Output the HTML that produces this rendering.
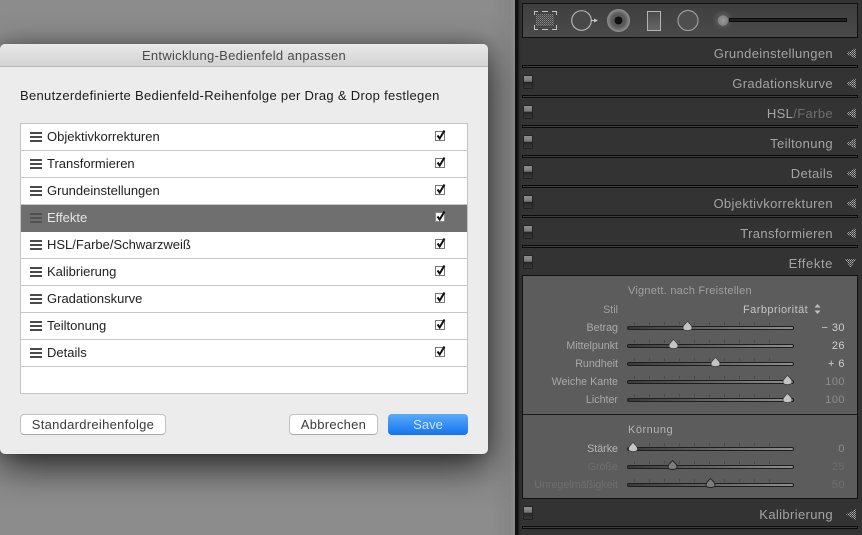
<!DOCTYPE html>
<html><head><meta charset="utf-8">
<style>
html,body{margin:0;padding:0}
body{width:862px;height:535px;overflow:hidden;position:relative;background:#8b8b8b;font-family:"Liberation Sans",sans-serif}
.a{position:absolute}
.left{left:0;top:0;width:515px;height:535px;background:linear-gradient(90deg,#8c8c8c 0,#8c8c8c 490px,#858585 510px,#8d8d8d 515px);overflow:hidden}
.dlg{left:0;top:44px;width:488px;height:410px;background:#ececec;border-radius:5px;box-shadow:0 12px 38px rgba(0,0,0,.72),0 0 14px rgba(0,0,0,.2)}
.tb{left:0;top:0;width:488px;height:22px;background:linear-gradient(#e9e9e9,#d3d3d3);border-bottom:1px solid #b5b5b5;border-radius:5px 5px 0 0;text-align:center;font-size:13px;line-height:23px;color:#4a4a4a;letter-spacing:.29px}
.hd{left:20px;top:44px;font-size:13px;line-height:16px;color:#1c1c1c;letter-spacing:.31px;white-space:nowrap}
.list{left:20px;top:123px;width:446px;height:269px;background:#fff;border:1px solid #c4c4c4}
.row{position:absolute;left:0;width:446px;height:26px;border-bottom:1px solid #c8c8c8;font-size:13px;line-height:25px;color:#222;letter-spacing:0}
.row span{position:absolute;left:26px;white-space:nowrap}
.row i{position:absolute;left:9px;top:8px;width:12px;height:2px;background:#4a4a4a;box-shadow:0 4px 0 #4a4a4a,0 8px 0 #4a4a4a}
.row svg{position:absolute;left:414px;top:5px}
.row.s{background:#6f6f6f;color:#e6e6e6;height:26px;border-bottom-color:#6f6f6f}
.row.s i{background:#525252;box-shadow:0 4px 0 #525252,0 8px 0 #525252}
.btn{top:414px;height:19px;background:#fff;border:1px solid #c2c2c2;border-bottom-color:#aaa;border-radius:4px;font-size:13px;line-height:20px;text-align:center;color:#3a3a3a;letter-spacing:.28px;white-space:nowrap}
.save{left:388px;top:414px;width:80px;height:21px;border-radius:4px;background:linear-gradient(#5aaaf8,#1573f0);color:#cfe4fb;font-size:13px;line-height:22px;text-align:center;letter-spacing:0}
.right{left:515px;top:0;width:347px;height:535px;background:#333}
.edge{left:515px;top:0;width:7px;height:535px;background:linear-gradient(90deg,#111 0,#111 3px,#2c2c2c 4px,#333 7px)}
.tool{left:522px;top:3px;width:334px;height:33px;background:linear-gradient(#3f3f3f,#4a4a4a);border:1px solid #111}
.h{right:29px;font-size:13px;line-height:16px;color:#a4a4a4;letter-spacing:.36px;white-space:nowrap}
.sep{left:522px;width:334px;height:1px;background:#3c3c3c;border:1px solid #0c0c0c}
.sw{left:524px;width:8px;height:12px;background:linear-gradient(#8e8e8e 0,#777 45%,#262626 50%,#383838 100%);box-shadow:0 0 0 .5px #111}
.body{left:522px;top:275px;width:334px;height:222px;background:#5c5c5c;border:1px solid #111}
.div{left:523px;top:414px;width:334px;height:1px;background:#1c1c1c}
.l{right:244px;font-size:10.7px;line-height:13px;color:#a9a9a9;white-space:nowrap}
.t{left:628px;font-size:11px;line-height:13px;color:#a6a6a6;letter-spacing:.24px;white-space:nowrap}
.v{right:17px;font-size:11px;line-height:13px;color:#cfcfcf;letter-spacing:.45px;white-space:nowrap}
.d{color:#6e6e6e}
.m{color:#8d8d8d}
.tr{left:627px;width:165px;height:2px;background:linear-gradient(90deg,#3a3a3a,#8f8f8f);border:1px solid #1e1e1e;border-radius:2px}
.tick{left:634px;width:150px;height:3px;background:repeating-linear-gradient(90deg,#4a4a4a 0 1px,transparent 1px 15px)}
</style></head>
<body>
<div class="a left">
<div class="a dlg">
<div class="a tb">Entwicklung-Bedienfeld anpassen</div>
<div class="a hd">Benutzerdefinierte Bedienfeld-Reihenfolge per Drag &amp; Drop festlegen</div>
</div>
<div class="a list">
<div class="row" style="top:0"><i></i><span>Objektivkorrekturen</span><svg width="11" height="13" viewBox="0 0 11 13"><rect x=".5" y="2.500" width="9" height="9" fill="#fff" stroke="#777"/><path d="M2.500 6.500L4.700 9.500L9.500 1.500" fill="none" stroke="#111" stroke-width="2"/></svg></div>
<div class="row" style="top:27px"><i></i><span>Transformieren</span><svg width="11" height="13" viewBox="0 0 11 13"><rect x=".5" y="2.500" width="9" height="9" fill="#fff" stroke="#777"/><path d="M2.500 6.500L4.700 9.500L9.500 1.500" fill="none" stroke="#111" stroke-width="2"/></svg></div>
<div class="row" style="top:54px"><i></i><span>Grundeinstellungen</span><svg width="11" height="13" viewBox="0 0 11 13"><rect x=".5" y="2.500" width="9" height="9" fill="#fff" stroke="#777"/><path d="M2.500 6.500L4.700 9.500L9.500 1.500" fill="none" stroke="#111" stroke-width="2"/></svg></div>
<div class="row s" style="top:81px"><i></i><span>Effekte</span><svg width="11" height="13" viewBox="0 0 11 13"><rect x=".5" y="2.500" width="9" height="9" fill="#f4f4f4" stroke="#888"/><path d="M2.500 6.500L4.700 9.500L9.500 1.500" fill="none" stroke="#111" stroke-width="2"/></svg></div>
<div class="row" style="top:108px"><i></i><span>HSL/Farbe/Schwarzweiß</span><svg width="11" height="13" viewBox="0 0 11 13"><rect x=".5" y="2.500" width="9" height="9" fill="#fff" stroke="#777"/><path d="M2.500 6.500L4.700 9.500L9.500 1.500" fill="none" stroke="#111" stroke-width="2"/></svg></div>
<div class="row" style="top:135px"><i></i><span>Kalibrierung</span><svg width="11" height="13" viewBox="0 0 11 13"><rect x=".5" y="2.500" width="9" height="9" fill="#fff" stroke="#777"/><path d="M2.500 6.500L4.700 9.500L9.500 1.500" fill="none" stroke="#111" stroke-width="2"/></svg></div>
<div class="row" style="top:162px"><i></i><span>Gradationskurve</span><svg width="11" height="13" viewBox="0 0 11 13"><rect x=".5" y="2.500" width="9" height="9" fill="#fff" stroke="#777"/><path d="M2.500 6.500L4.700 9.500L9.500 1.500" fill="none" stroke="#111" stroke-width="2"/></svg></div>
<div class="row" style="top:189px"><i></i><span>Teiltonung</span><svg width="11" height="13" viewBox="0 0 11 13"><rect x=".5" y="2.500" width="9" height="9" fill="#fff" stroke="#777"/><path d="M2.500 6.500L4.700 9.500L9.500 1.500" fill="none" stroke="#111" stroke-width="2"/></svg></div>
<div class="row" style="top:216px"><i></i><span>Details</span><svg width="11" height="13" viewBox="0 0 11 13"><rect x=".5" y="2.500" width="9" height="9" fill="#fff" stroke="#777"/><path d="M2.500 6.500L4.700 9.500L9.500 1.500" fill="none" stroke="#111" stroke-width="2"/></svg></div>
</div>
<div class="a btn" style="left:20px;width:144px">Standardreihenfolge</div>
<div class="a btn" style="left:289px;width:87px">Abbrechen</div>
<div class="a save">Save</div>
</div>

<div class="a right"></div>
<div class="a edge"></div>
<div class="a tool"></div>
<svg class="a" style="left:522px;top:3px" width="336" height="35" viewBox="522 3 336 35">
<defs>
<pattern id="cd" width="2" height="2" patternUnits="userSpaceOnUse"><rect width="1" height="1" fill="#8a8a8a"/><rect x="1" y="1" width="1" height="1" fill="#6a6a6a"/></pattern>
<radialGradient id="eye"><stop offset="0" stop-color="#555"/><stop offset=".6" stop-color="#5a5a5a"/><stop offset="1" stop-color="#929292"/></radialGradient>
<radialGradient id="hd"><stop offset="0" stop-color="#999"/><stop offset=".5" stop-color="#808080"/><stop offset=".55" stop-color="#555"/><stop offset="1" stop-color="#474747"/></radialGradient>
<linearGradient id="rc" x1="0" y1="0" x2="0" y2="1"><stop offset="0" stop-color="#4a4a4a"/><stop offset="1" stop-color="#666"/></linearGradient>
</defs>
<rect x="536" y="14" width="18" height="12" fill="url(#cd)"/>
<g fill="none" stroke="#c4c4c4" stroke-width="1">
<path d="M534.500 15V11.500H538M542 11.500H548M552 11.500H556.500V15M534.500 25V29.500H538M542 29.500H548M552 29.500H556.500V25"/>
<circle cx="581.500" cy="20.500" r="9.800" stroke="#b0b0b0" fill="#484848" stroke-width="1.200"/>
<path d="M591 20.500H596" stroke="#c8c8c8"/>
</g>
<path d="M594 18.500L598 20.500L594 22.500Z" fill="#c8c8c8"/>
<circle cx="618.500" cy="20.500" r="11.500" fill="url(#eye)"/>
<circle cx="618.500" cy="20.500" r="4" fill="#111"/>
<rect x="647.500" y="11.500" width="13" height="19" fill="url(#rc)" stroke="#b4b4b4"/>
<circle cx="688" cy="20.500" r="10" fill="#4e4e4e" stroke="#9c9c9c" stroke-width="1.200"/>
<circle cx="723" cy="20.500" r="10" fill="url(#hd)"/>
<rect x="729.500" y="18.500" width="117" height="3" fill="#222" stroke="#0a0a0a"/>
</svg>

<div class="a h" style="top:46px">Grundeinstellungen</div>
<div class="a h" style="top:76px">Gradationskurve</div>
<div class="a h" style="top:106px">HSL<span style="color:#6e6e6e">/Farbe</span></div>
<div class="a h" style="top:136px">Teiltonung</div>
<div class="a h" style="top:166px">Details</div>
<div class="a h" style="top:196px">Objektivkorrekturen</div>
<div class="a h" style="top:226px">Transformieren</div>
<div class="a h" style="top:256px;letter-spacing:.6px">Effekte</div>
<div class="a h" style="top:507px">Kalibrierung</div>

<div class="a sep" style="top:65px"></div>
<div class="a sep" style="top:95px"></div>
<div class="a sep" style="top:125px"></div>
<div class="a sep" style="top:155px"></div>
<div class="a sep" style="top:185px"></div>
<div class="a sep" style="top:215px"></div>
<div class="a sep" style="top:245px"></div>
<div class="a sep" style="top:526px"></div>

<div class="a sw" style="top:76px"></div>
<div class="a sw" style="top:106px"></div>
<div class="a sw" style="top:136px"></div>
<div class="a sw" style="top:166px"></div>
<div class="a sw" style="top:196px"></div>
<div class="a sw" style="top:226px"></div>
<div class="a sw" style="top:256px"></div>
<div class="a sw" style="top:507px"></div>

<svg class="a" style="left:0;top:0" width="862" height="535">
<defs><pattern id="dt" width="2" height="2" patternUnits="userSpaceOnUse"><rect width="1" height="1" fill="#b4b4b4"/><rect x="1" y="1" width="1" height="1" fill="#8a8a8a"/></pattern></defs>
<g fill="url(#dt)">
<path d="M846 53.500L856 48V59Z"/><path d="M846 83.500L856 78V89Z"/><path d="M846 113.500L856 108V119Z"/><path d="M846 143.500L856 138V149Z"/><path d="M846 173.500L856 168V179Z"/><path d="M846 203.500L856 198V209Z"/><path d="M846 233.500L856 228V239Z"/><path d="M846 514.500L856 509V520Z"/>
<path d="M845 259H856L850.500 268Z"/>
</g>
</svg>

<div class="a body"></div>
<div class="a div"></div>

<div class="a t" style="top:285px;color:#a0a0a0">Vignett. nach Freistellen</div>
<div class="a l" style="top:304px;color:#a0a0a0">Stil</div>
<div class="a" style="left:743px;top:304px;font-size:11px;line-height:13px;color:#c4c4c4;letter-spacing:.45px">Farbpriorität</div>
<svg class="a" style="left:814px;top:304px" width="7" height="10"><path d="M3.500 0L6.500 3.500H.5ZM3.500 10L6.500 6.500H.5Z" fill="#c0c0c0"/></svg>

<div class="a l" style="top:322px">Betrag</div>
<div class="a l" style="top:340px">Mittelpunkt</div>
<div class="a l" style="top:358px">Rundheit</div>
<div class="a l" style="top:376px">Weiche Kante</div>
<div class="a l" style="top:394px">Lichter</div>
<div class="a t" style="top:424px;color:#b4b4b4;letter-spacing:.5px">Körnung</div>
<div class="a l" style="top:443px;color:#b4b4b4">Stärke</div>
<div class="a l d" style="top:461px">Größe</div>
<div class="a l d" style="top:479px">Unregelmäßigkeit</div>

<div class="a v" style="top:322px">− 30</div>
<div class="a v" style="top:340px">26</div>
<div class="a v" style="top:358px">+ 6</div>
<div class="a v m" style="top:376px">100</div>
<div class="a v m" style="top:394px">100</div>
<div class="a v m" style="top:443px">0</div>
<div class="a v d" style="top:461px">25</div>
<div class="a v d" style="top:479px">50</div>

<div class="a tick" style="top:322px"></div><div class="a tr" style="top:326px"></div>
<div class="a tick" style="top:340px"></div><div class="a tr" style="top:344px"></div>
<div class="a tick" style="top:358px"></div><div class="a tr" style="top:362px"></div>
<div class="a tick" style="top:376px"></div><div class="a tr" style="top:380px"></div>
<div class="a tick" style="top:394px"></div><div class="a tr" style="top:398px"></div>
<div class="a tick" style="top:443px"></div><div class="a tr" style="top:447px"></div>
<div class="a tick" style="top:461px"></div><div class="a tr" style="top:465px"></div>
<div class="a tick" style="top:479px"></div><div class="a tr" style="top:483px"></div>

<svg class="a" style="left:0;top:0" width="862" height="535">
<defs><path id="k" d="M0 -5.500C1.500 -3.500 4.500 -2 4.500 1C4.500 3 3 3.500 0 3.500C-3 3.500 -4.500 3 -4.500 1C-4.500 -2 -1.500 -3.500 0 -5.500Z"/></defs>
<g fill="#c4c4c4" stroke="#333" stroke-width=".6">
<use href="#k" x="687.500" y="327"/>
<use href="#k" x="673.500" y="345"/>
<use href="#k" x="715.500" y="363"/>
<use href="#k" x="787.500" y="381"/>
<use href="#k" x="787.500" y="399"/>
<use href="#k" x="633" y="448"/>
</g>
<g fill="#7d7d7d" stroke="#222" stroke-width=".9">
<use href="#k" x="672.500" y="466"/>
<use href="#k" x="710.500" y="484"/>
</g>
</svg>
</body></html>
